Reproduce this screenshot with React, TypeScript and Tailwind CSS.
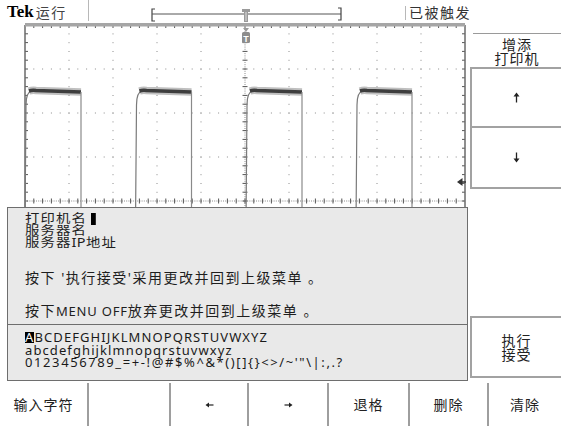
import React from "react";

function Graticule() {
  const x0 = 25;
  const x1 = 465;
  const y0 = 2;
  const y1 = 354;
  const d = 44;
  const m = 8.8;
  const cx = x0 + d * 5;
  const cy = y0 + d * 4;
  const els: React.ReactElement[] = [];

  for (let k = 1; k < 10; k++) {
    if (k === 5) continue;
    const x = x0 + d * k;
    els.push(
      <line key={`v${k}`} x1={x} y1={y0 + 4} x2={x} y2={y1} stroke="#8c8c8c" strokeWidth={1} strokeDasharray="1 7.8" strokeDashoffset={-4.4} />
    );
  }
  for (let j = 1; j < 8; j++) {
    if (j === 4) continue;
    const y = y0 + d * j;
    els.push(
      <line key={`h${j}`} x1={x0} y1={y} x2={x1} y2={y} stroke="#8c8c8c" strokeWidth={1} strokeDasharray="1 7.8" strokeDashoffset={-8.3} />
    );
  }
  els.push(<line key="cv" x1={cx} y1={y0 + 4} x2={cx} y2={y1} stroke="#8c8c8c" strokeDasharray="1 1.2" />);
  els.push(<line key="ch" x1={x0} y1={cy} x2={x1} y2={cy} stroke="#8c8c8c" strokeDasharray="1 1.2" />);
  let n = 0;
  for (let y = y0 + m; y < y1; y += m) {
    n++;
    els.push(<line key={`tv${n}`} x1={cx - 2.5} y1={y} x2={cx + 2.5} y2={y} stroke="#555" strokeWidth={1} />);
    els.push(<line key={`tl${n}`} x1={x0} y1={y} x2={x0 + 3} y2={y} stroke="#555" strokeWidth={1} />);
    els.push(<line key={`tr${n}`} x1={x1 - 3} y1={y} x2={x1} y2={y} stroke="#555" strokeWidth={1} />);
  }
  n = 0;
  for (let x = x0 + m; x < x1; x += m) {
    n++;
    els.push(<line key={`th${n}`} x1={x} y1={cy - 2.5} x2={x} y2={cy + 2.5} stroke="#555" strokeWidth={1} />);
    els.push(<line key={`tt${n}`} x1={x} y1={0} x2={x} y2={5} stroke="#555" strokeWidth={1} />);
  }

  const rises = [26, 136.5, 247, 357];
  const wave: React.ReactElement[] = [];
  rises.forEach((r, i) => {
    const f = r + 55;
    wave.push(
      <path key={`re${i}`} d={`M ${r - 1} 200 L ${r} 82 Q ${r} 69 ${r + 6} 67.5`} fill="none" stroke="#7a7a7a" strokeWidth={1.2} />
    );
    wave.push(
      <path key={`bh${i}`} d={`M ${r + 3} 68 Q ${r + 6} 67 ${r + 10} 67.5 L ${f} 69`} fill="none" stroke="#8a8a8a" strokeWidth={7.5} strokeOpacity={0.55} />
    );
    wave.push(
      <path key={`bc${i}`} d={`M ${r + 3} 68 Q ${r + 6} 67 ${r + 10} 67.5 L ${f} 69`} fill="none" stroke="#3e3e3e" strokeWidth={3.5} />
    );
    wave.push(<line key={`fe${i}`} x1={f} y1={69} x2={f} y2={200} stroke="#8a8a8a" strokeWidth={1.2} />);
  });

  return (
    <svg width="470" height="360" className="block">
      {els}
      <line x1={x0} y1={y0} x2={x0} y2={y1} stroke="#6a6a6a" strokeWidth={1.5} />
      <line x1={x1} y1={y0} x2={x1} y2={y1} stroke="#6a6a6a" strokeWidth={1.5} />
      <rect x={x0} y={0} width={x1 - x0} height={3.5} fill="#a6a6a6" />
      {wave}
      <path d="M243 5 L249 5 L246 9 Z" fill="#9a9a9a" />
      <rect x={242} y={9} width={8} height={11} rx={1.5} fill="#8c8c8c" />
      <text x={246} y={18.5} textAnchor="middle" fontSize="9" fontWeight="bold" fill="#fff" fontFamily="Liberation Sans, sans-serif">T</text>
      <path d="M457 159 L462.5 155 L462.5 163 Z" fill="#333" />
      <line x1={462} y1={159} x2={466} y2={159} stroke="#333" strokeWidth={1.5} />
    </svg>
  );
}

function UpArrow() {
  return (
    <svg width="7" height="11" viewBox="0 0 7 11">
      <path d="M3.5 0.5 L6.5 4.5 L0.5 4.5 Z" fill="#222" />
      <line x1={3.5} y1={4} x2={3.5} y2={10.5} stroke="#222" strokeWidth={1.3} />
    </svg>
  );
}

function DownArrow() {
  return (
    <svg width="7" height="11" viewBox="0 0 7 11">
      <path d="M3.5 10.5 L6.5 6.5 L0.5 6.5 Z" fill="#222" />
      <line x1={3.5} y1={0.5} x2={3.5} y2={7} stroke="#222" strokeWidth={1.3} />
    </svg>
  );
}

function LeftArrow() {
  return (
    <svg width="9" height="6" viewBox="0 0 9 6">
      <path d="M0.5 3 L4 0.5 L4 5.5 Z" fill="#222" />
      <line x1={3.5} y1={3} x2={8.5} y2={3} stroke="#222" strokeWidth={1.2} />
    </svg>
  );
}

function RightArrow() {
  return (
    <svg width="9" height="6" viewBox="0 0 9 6">
      <path d="M8.5 3 L5 0.5 L5 5.5 Z" fill="#222" />
      <line x1={0.5} y1={3} x2={5.5} y2={3} stroke="#222" strokeWidth={1.2} />
    </svg>
  );
}

export default function App() {
  return (
    <div className="w-[561px] h-[426px] bg-white flex flex-col overflow-hidden text-[#222] font-['Noto_Sans','Noto_Sans_CJK_SC',sans-serif]">
      {/* top status bar */}
      <div className="h-[23px] shrink-0 flex items-stretch">
        <div className="w-[88px] flex items-center pl-[7px] gap-[2px]">
          <span className="font-['Liberation_Serif',serif] font-bold text-[17px] leading-none text-black">Tek</span>
          <span className="font-['Noto_Sans_CJK_SC',sans-serif] text-[14px] leading-none tracking-[1.5px] text-[#444]">运行</span>
        </div>
        <div className="w-px bg-[#b8b8b8] h-[21px]" />
        <svg width="316" height="23" className="block">
          <path d="M66 9 L63 9 L63 21 L66 21" fill="none" stroke="#444" strokeWidth={1.2} />
          <line x1={63} y1={14} x2={252} y2={14} stroke="#555" strokeWidth={1} />
          <path d="M249 8 L252 8 L252 20 L249 20" fill="none" stroke="#444" strokeWidth={1.2} />
          <rect x={153} y={9} width={8} height={3} fill="#9a9a9a" />
          <rect x={155} y={12} width={4} height={10} fill="#9a9a9a" />
          <line x1={157} y1={12} x2={157} y2={21} stroke="#e0e0e0" strokeWidth={1} />
        </svg>
        <div className="w-px bg-[#b8b8b8] mt-[6px] h-[14px]" />
        <div className="pl-[3px] flex items-center font-['Noto_Sans_CJK_SC',sans-serif] text-[14px] leading-none tracking-[1.5px] text-[#333]">已被触发</div>
      </div>

      {/* middle */}
      <div className="h-[360px] shrink-0 flex">
        <div className="w-[470px] relative">
          <Graticule />
          <div className="absolute left-[7px] top-[184px] w-[461px] h-[174px] bg-[#e9e9e9] border border-[#6e6e6e] flex flex-col">
            <div className="h-[117px] border-b border-[#6e6e6e] pl-[17px] pt-[5px] flex flex-col text-[14px] tracking-[1.5px] text-[#1e1e1e]">
              <div className="h-[12px] leading-[12px] text-[12px] tracking-[0.9px] origin-left scale-x-[1.2] flex items-center">
                <span>打印机名</span>
                <span className="inline-block w-[4px] h-[12px] bg-black ml-[3px]" />
              </div>
              <div className="h-[12px] leading-[12px] text-[12px] tracking-[0.9px] origin-left scale-x-[1.2]">服务器名</div>
              <div className="h-[12px] leading-[12px] text-[12px] tracking-[0.9px] origin-left scale-x-[1.2]">
                服务器<span className="tracking-[0.4px]">IP</span>地址
              </div>
              <div className="h-[16px] leading-[16px] mt-[21px]">按下 '执行接受'采用更改并回到上级菜单 。</div>
              <div className="h-[16px] leading-[16px] mt-[17px]">
                按下<span className="text-[13px] tracking-[0.8px]">MENU OFF</span>放弃更改并回到上级菜单 。
              </div>
            </div>
            <div className="pl-[17px] pt-[6px] flex flex-col text-[13px] leading-[12.5px] tracking-[1.1px] text-[#1a1a1a] font-['Noto_Sans',sans-serif]">
              <div className="h-[12.5px]">
                <span className="inline-block bg-black text-white h-[11px] leading-[11px]">A</span>BCDEFGHIJKLMNOPQRSTUVWXYZ
              </div>
              <div className="h-[12.5px]">abcdefghijklmnopqrstuvwxyz</div>
              <div className="h-[12.5px] tracking-[1.6px]">0123456789_=+-!@#$%^&amp;*()[]{"{}"}&lt;&gt;/~'"\|:,.?</div>
            </div>
          </div>
        </div>

        {/* right side menu */}
        <div className="flex-1 flex flex-col pt-[10px] font-['Noto_Sans_CJK_SC',sans-serif] text-[14px] leading-[14px] tracking-[1px] text-[#222]">
          <div className="h-[34px] ml-[3px] border-t border-[#9a9a9a] flex flex-col items-center justify-center">
            <span>增添</span>
            <span>打印机</span>
          </div>
          <div className="h-[61px] border-2 border-r-0 border-[#a2a2a2] flex items-center justify-center">
            <UpArrow />
          </div>
          <div className="h-[61px] border-2 border-r-0 border-t-0 border-[#a2a2a2] flex items-center justify-center">
            <DownArrow />
          </div>
          <div className="h-[127px]" />
          <div className="h-[62px] border-2 border-r-0 border-[#a2a2a2] flex flex-col items-center justify-center">
            <span>执行</span>
            <span>接受</span>
          </div>
        </div>
      </div>

      {/* bottom soft keys */}
      <div className="flex-1 flex font-['Noto_Sans_CJK_SC',sans-serif] text-[14px] tracking-[1px] text-[#222]">
        <div className="w-[87px] flex items-center justify-center">输入字符</div>
        <div className="w-[82px] border-l-2 border-[#9e9e9e]" />
        <div className="w-[78px] border-l-2 border-[#9e9e9e] flex items-center justify-center">
          <LeftArrow />
        </div>
        <div className="w-[80px] border-l-2 border-[#9e9e9e] flex items-center justify-center">
          <RightArrow />
        </div>
        <div className="w-[81px] border-l-2 border-[#9e9e9e] flex items-center justify-center">退格</div>
        <div className="w-[79px] border-l-2 border-[#9e9e9e] flex items-center justify-center">删除</div>
        <div className="flex-1 border-l-2 border-[#9e9e9e] flex items-center justify-center">清除</div>
      </div>
    </div>
  );
}
